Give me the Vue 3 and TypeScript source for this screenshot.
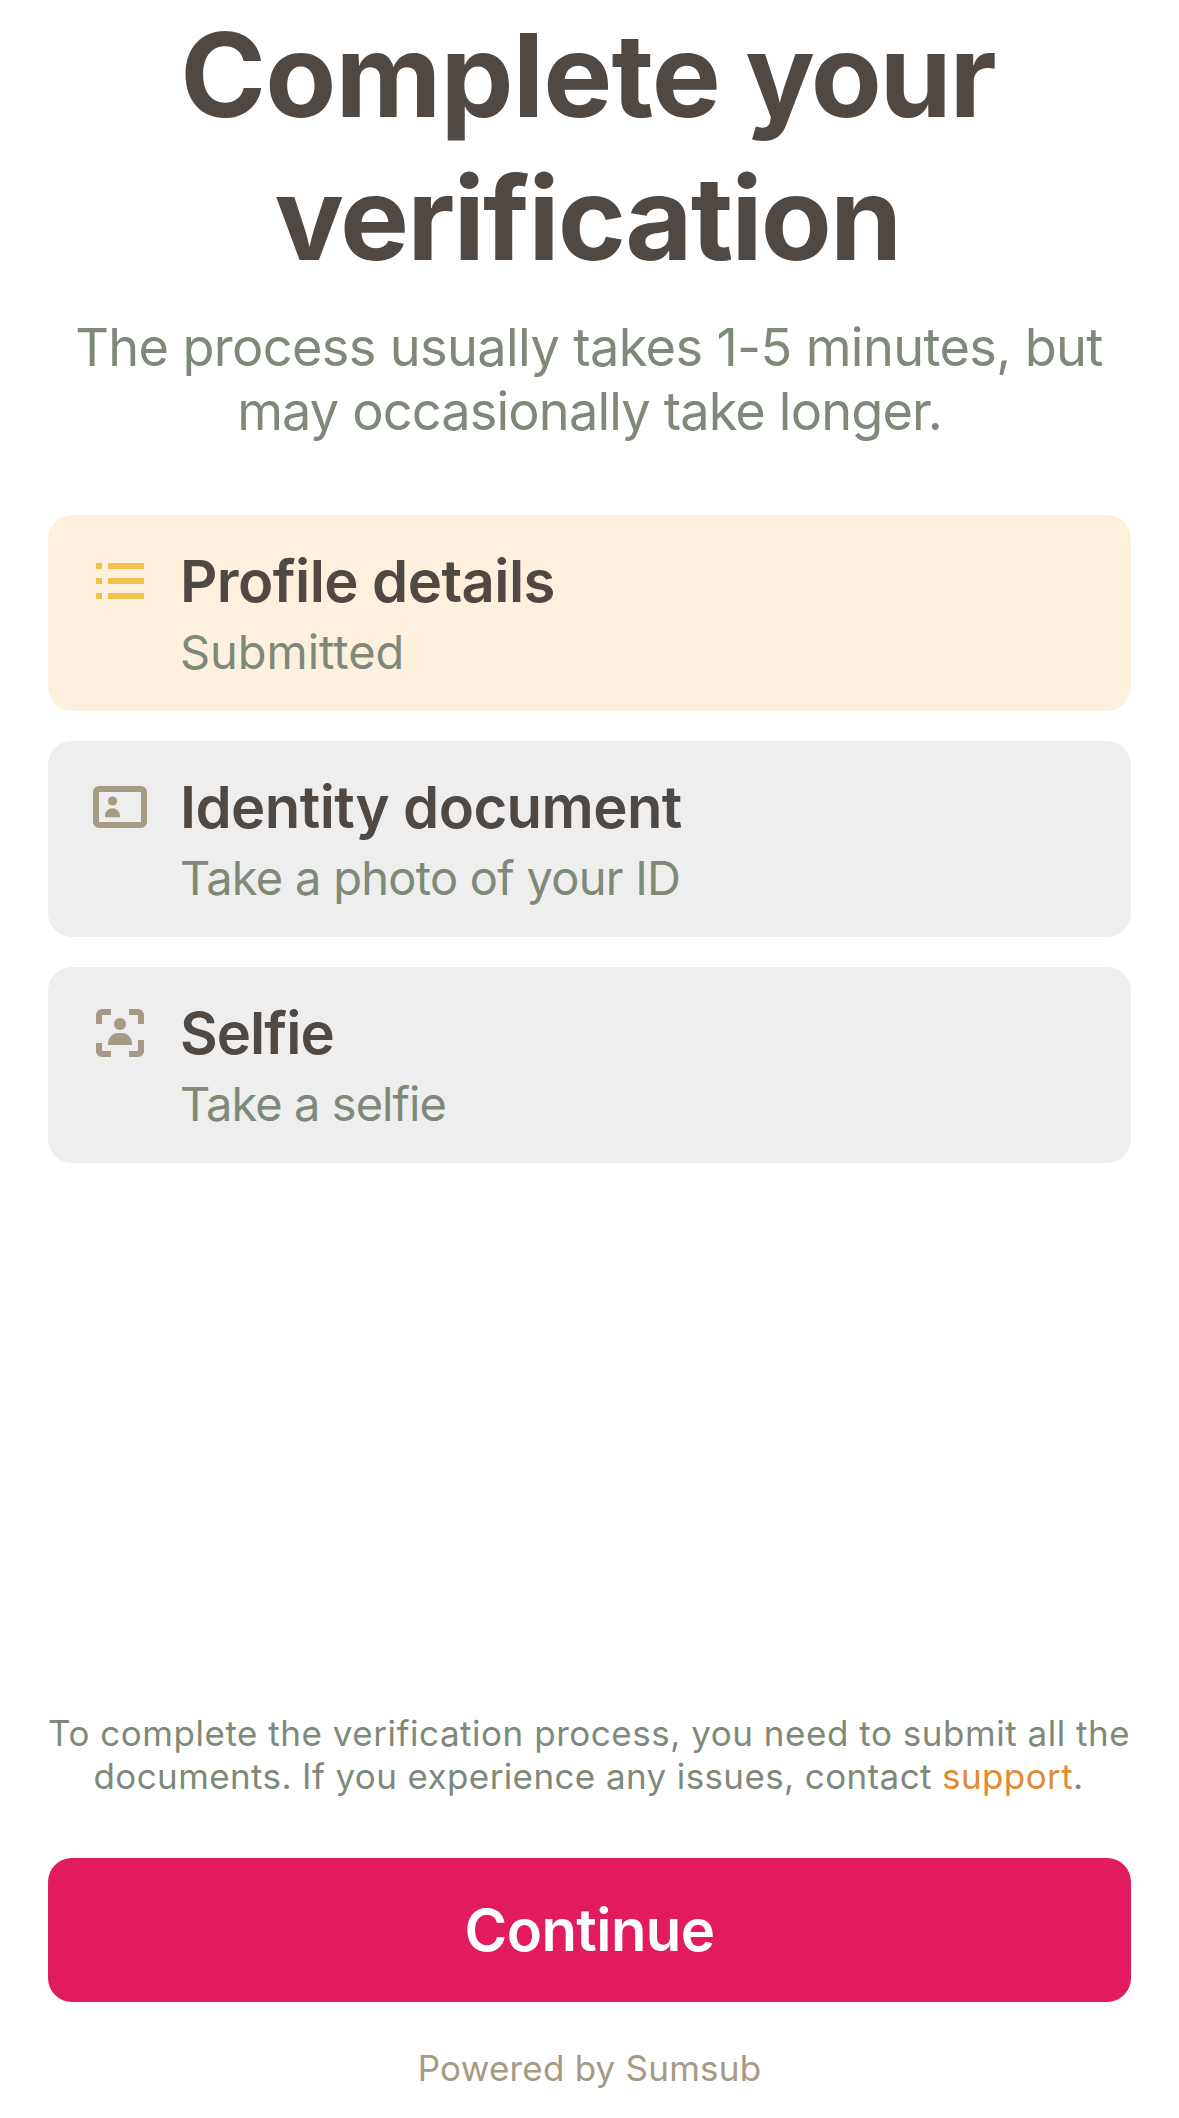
<script setup lang="ts">
type IconName = 'list' | 'idCard' | 'selfie'

interface Step {
  key: string
  icon: IconName
  title: string
  hint: string
  submitted: boolean
}

const steps: Step[] = [
  { key: 'profile', icon: 'list', title: 'Profile details', hint: 'Submitted', submitted: true },
  { key: 'identity', icon: 'idCard', title: 'Identity document', hint: 'Take a photo of your ID', submitted: false },
  { key: 'face', icon: 'selfie', title: 'Selfie', hint: 'Take a selfie', submitted: false },
]
</script>

<template>
  <main class="screen">
    <header class="intro">
      <h1 class="title">
        <span class="line title-first">Complete <span class="title-tail">your</span></span>
        <span class="line title-second">verification</span>
      </h1>
      <p class="subtitle">
        <span class="line subtitle-first">The process usually takes 1-5 minutes, but</span>
        <span class="line subtitle-second">may occasionally take longer.</span>
      </p>
    </header>

    <ul class="steps">
      <li v-for="step in steps" :key="step.key" class="step" :class="[step.key, { submitted: step.submitted }]">
        <svg class="icon" viewBox="0 0 72 72" fill="currentColor" aria-hidden="true">
          <template v-if="step.icon === 'list'">
            <path d="M12 18h6v6h-6zM24 18h36v6H24zM12 33h6v6h-6zM24 33h36v6H24zM12 48h6v6h-6zM24 48h36v6H24z" />
          </template>
          <template v-else-if="step.icon === 'idCard'">
            <path
              fill-rule="evenodd"
              d="M15 15h42a6 6 0 0 1 6 6v30a6 6 0 0 1-6 6H15a6 6 0 0 1-6-6V21a6 6 0 0 1 6-6zM15 21v30h42V21z"
            />
            <circle cx="28.5" cy="30" r="4.6" />
            <path d="M21 46.2v-1.4a7.5 7.5 0 0 1 15 0v1.4z" />
          </template>
          <template v-else>
            <path
              d="M12 27v-9a6 6 0 0 1 6-6h9v6h-9v9zM45 12h9a6 6 0 0 1 6 6v9h-6v-9h-9zM12 46h6v8h9v6h-9a6 6 0 0 1-6-6zM54 43h6v11a6 6 0 0 1-6 6h-9v-6h9z"
            />
            <circle cx="36" cy="27" r="6" />
            <path d="M24 48v-2a10 10 0 0 1 10-10h4a10 10 0 0 1 10 10v2z" />
          </template>
        </svg>
        <div class="step-text">
          <h2 class="step-title">{{ step.title }}</h2>
          <p class="step-hint">{{ step.hint }}</p>
        </div>
      </li>
    </ul>

    <footer class="footer">
      <p class="note">
        <span class="line note-first">To complete the verification process, you need to submit all the</span>
        <span class="line note-second">documents. If you experience any issues, contact <a class="support">support</a>.</span>
      </p>
      <button class="continue" type="button">Continue</button>
      <p class="powered">Powered by Sumsub</p>
    </footer>
  </main>
</template>

<style>
body {
  margin: 0;
  background: #fff;
}
</style>

<style scoped>
.screen {
  box-sizing: border-box;
  display: flex;
  flex-direction: column;
  width: 1179px;
  height: 2118px;
  padding: 4px 48px 29px;
  overflow: hidden;
  background: #fff;
  color: #4f4843;
  font-family: Inter, 'Liberation Sans', sans-serif;
}

h1,
h2,
p,
ul {
  margin: 0;
  padding: 0;
}

.line {
  display: block;
  white-space: nowrap;
}

.intro {
  text-align: center;
}

.title {
  padding-right: 4px;
  font-size: 116px;
  font-weight: 700;
  line-height: 143px;
}

.title-first {
  letter-spacing: -0.9px;
  word-spacing: -1.5px;
}

.title-tail {
  letter-spacing: -2.2px;
}

.title-second {
  letter-spacing: -1.9px;
}

.subtitle {
  margin-top: 25px;
  color: #7f8979;
  font-size: 52.3px;
  line-height: 64px;
}

.subtitle-first {
  padding-right: 1px;
  letter-spacing: -0.64px;
}

.subtitle-second {
  letter-spacing: -0.855px;
}

.steps {
  display: flex;
  flex-direction: column;
  gap: 30px;
  margin-top: 72px;
  list-style: none;
}

.step {
  box-sizing: border-box;
  display: flex;
  align-items: flex-start;
  gap: 24px;
  height: 196px;
  padding: 30px 36px;
  border-radius: 24px;
  background: #eee;
  color: #a59a84;
}

.step.submitted {
  background: #fdf1de;
  color: #f3bf4f;
}

.icon {
  flex: none;
  width: 72px;
  height: 72px;
}

.step-title {
  color: #4f4843;
  font-size: 58px;
  font-weight: 600;
  line-height: 72px;
  letter-spacing: -0.57px;
}

.face .step-title {
  letter-spacing: -0.95px;
}

.step-hint {
  margin-top: 6px;
  color: #7f8979;
  font-size: 47px;
  line-height: 58px;
  letter-spacing: -0.73px;
}

.profile .step-hint {
  letter-spacing: -0.04px;
}

.face .step-hint {
  letter-spacing: -0.93px;
}

.footer {
  display: flex;
  flex-direction: column;
  margin-top: auto;
}

.note {
  padding-right: 2px;
  color: #7f8979;
  font-size: 35px;
  line-height: 43px;
  text-align: center;
}

.note-first {
  letter-spacing: 0.529px;
}

.note-second {
  letter-spacing: 0.387px;
}

.support {
  color: #e18b34;
}

.continue {
  height: 144px;
  margin-top: 60px;
  padding: 0;
  border: 0;
  border-radius: 24px;
  background: #e21c5c;
  color: #fff;
  font: 600 58px/72px Inter, 'Liberation Sans', sans-serif;
  letter-spacing: -0.55px;
}

.powered {
  margin-top: 45px;
  color: #a59a84;
  font-size: 35px;
  line-height: 42px;
  letter-spacing: 0.22px;
  text-align: center;
}
</style>
